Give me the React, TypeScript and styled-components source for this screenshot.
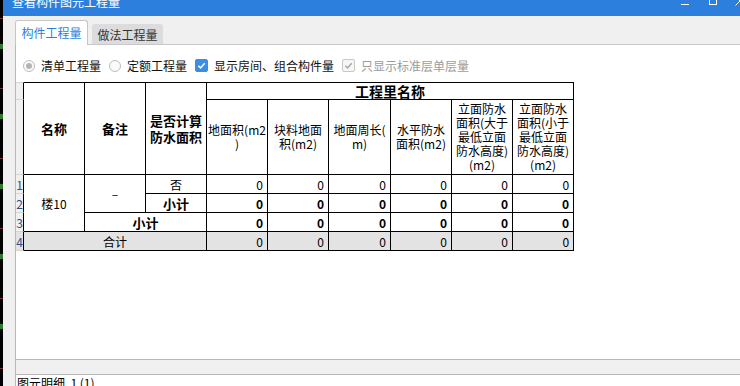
import styled, { createGlobalStyle } from "styled-components";

const GlobalStyle = createGlobalStyle`
  * { box-sizing: border-box; }
  body {
    margin: 0;
    background: #000;
    font-family: "Noto Sans CJK SC", "Liberation Sans", sans-serif;
    font-size: 12px;
    color: #000;
  }
`;

const Screen = styled.div`
  display: flex;
  width: 740px;
  height: 386px;
  overflow: hidden;
`;

// a sliver of the app behind the dialog
const Backdrop = styled.div`
  width: 3px;
  flex-shrink: 0;
  background: repeating-linear-gradient(
    180deg,
    #000 0 18px,
    #7a3030 18px 19px,
    #000 19px 44px,
    #2f7a2f 44px 49px,
    #000 49px 70px
  );
`;

const Window = styled.div`
  flex: 1;
  display: flex;
  flex-direction: column;
  background: #f0f0f0;
  min-width: 0;
`;

const TitleBar = styled.div`
  height: 16px;
  flex-shrink: 0;
  display: flex;
  align-items: flex-start;
  padding-left: 9px;
  background: #2d7fdd;
  overflow: hidden;
`;

const TitleText = styled.span`
  color: #fff;
  font-size: 12px;
  line-height: 12px;
  margin-top: -4px;
`;

const Controls = styled.div`
  margin-left: auto;
  margin-right: -5px;
  display: flex;
  align-items: flex-start;
  gap: 20px;
`;

const MinBtn = styled.div`
  width: 8px;
  height: 1px;
  margin-top: 4px;
  background: #fff;
`;

const MaxBtn = styled.div`
  width: 8px;
  height: 8px;
  margin-top: -3px;
  border: 1px solid #fff;
`;

const CloseBtn = styled.svg`
  width: 10px;
  height: 10px;
  margin-top: -4px;
  margin-left: -2px;
`;

const Body = styled.div`
  flex: 1;
  display: flex;
  flex-direction: column;
  padding: 4px 0 0 12px;
  min-height: 0;
`;

const Tabs = styled.div`
  display: flex;
  align-items: flex-end;
  gap: 4px;
  position: relative;
  z-index: 1;
`;

const Tab = styled.div<{ $active?: boolean }>`
  height: ${(p) => (p.$active ? 25 : 20)}px;
  width: ${(p) => (p.$active ? 73 : 71)}px;
  margin-bottom: ${(p) => (p.$active ? -1 : 0)}px;
  display: flex;
  align-items: center;
  justify-content: center;
  padding-bottom: ${(p) => (p.$active ? 1 : 0)}px;
  border-radius: 3px 3px 0 0;
  border: ${(p) => (p.$active ? "1px solid #c6c6c6" : "none")};
  border-bottom: none;
  background: ${(p) => (p.$active ? "#fff" : "#dcdcdc")};
  color: ${(p) => (p.$active ? "#2d7fdd" : "#333")};
  font-size: 12px;
`;

const Panel = styled.div`
  flex: 1;
  display: flex;
  flex-direction: column;
  background: #fff;
  border-top: 1px solid #c8c8c8;
  border-left: 1px solid #b8b8b8;
  min-height: 0;
`;

const Options = styled.div`
  height: 18px;
  margin: 12px 0 8px;
  padding-left: 7px;
  display: flex;
  align-items: center;
  gap: 8px;
`;

const Option = styled.label<{ $disabled?: boolean }>`
  display: flex;
  align-items: center;
  gap: 6px;
  color: ${(p) => (p.$disabled ? "#9c9c9c" : "#111")};
  white-space: nowrap;
`;

const Radio = styled.span<{ $checked?: boolean }>`
  width: 12px;
  height: 12px;
  border-radius: 50%;
  border: 1px solid #bdbdbd;
  background: #fafafa;
  display: flex;
  align-items: center;
  justify-content: center;
  &::after {
    content: "";
    width: 6px;
    height: 6px;
    border-radius: 50%;
    background: ${(p) => (p.$checked ? "#b4b4b4" : "transparent")};
  }
`;

const Check = styled.span<{ $disabled?: boolean }>`
  width: 13px;
  height: 13px;
  border-radius: 2px;
  border: 1px solid ${(p) => (p.$disabled ? "#c8c8c8" : "#3a8ee6")};
  background: ${(p) => (p.$disabled ? "#f6f6f6" : "#3a8ee6")};
  display: flex;
  align-items: center;
  justify-content: center;
  svg {
    width: 9px;
    height: 9px;
  }
`;

const GridArea = styled.div`
  height: 277px;
  flex-shrink: 0;
  background: #fff;
`;

const Table = styled.table`
  border-collapse: separate;
  border-spacing: 0;
  table-layout: fixed;
  width: 558px;
  font-size: 12px;
`;

const Row = styled.tr<{ $h: number }>`
  height: ${(p) => p.$h}px;
`;

const Gutter = styled.td<{ $top?: boolean; $shade?: boolean }>`
  padding: 0;
  border-right: 1px solid #000;
  border-bottom: 1px solid #d4d4d4;
  border-top: ${(p) => (p.$top ? "1px solid #d4d4d4" : "none")};
  background: ${(p) => (p.$shade ? "#e3e3e3" : "#f0f0f0")};
  color: #2f4f88;
  text-align: center;
  line-height: 13px;
  overflow: hidden;
`;

const Cell = styled.td<{
  $align?: "left" | "center" | "right";
  $bold?: boolean;
  $shade?: boolean;
  $top?: boolean;
  $size?: number;
  $lh?: number;
}>`
  padding: 0 ${(p) => (p.$align === "right" ? 4 : 1)}px 0 1px;
  border-right: 1px solid #000;
  border-bottom: 1px solid #000;
  border-top: ${(p) => (p.$top ? "1px solid #000" : "none")};
  background: ${(p) => (p.$shade ? "#e3e3e3" : "#fff")};
  text-align: ${(p) => p.$align ?? "center"};
  font-weight: ${(p) => (p.$bold ? 700 : 400)};
  font-size: ${(p) => p.$size ?? 12}px;
  line-height: ${(p) => p.$lh ?? 13}px;
  white-space: nowrap;
  vertical-align: middle;
  overflow: hidden;
`;

const Splitter = styled.div`
  height: 16px;
  flex-shrink: 0;
  background: #f0f0f0;
  border-top: 1px solid #b8b8b8;
  border-bottom: 1px solid #b8b8b8;
`;

const Status = styled.div`
  padding: 1px 0 0 1px;
  line-height: 14px;
  white-space: pre;
`;

const widths = [8, 61, 61, 61, 61, 61, 62, 61, 61, 61];

const qtyHeads = [
  ["地面积(m2", ")"],
  ["块料地面", "积(m2)"],
  ["地面周长(", "m)"],
  ["水平防水", "面积(m2)"],
  ["立面防水", "面积(大于", "最低立面", "防水高度)", "(m2)"],
  ["立面防水", "面积(小于", "最低立面", "防水高度)", "(m2)"],
];

const zeros = [0, 0, 0, 0, 0, 0];

function Lines({ lines }: { lines: string[] }) {
  return (
    <>
      {lines.map((l, i) => (
        <div key={i}>{l}</div>
      ))}
    </>
  );
}

function Values({ bold, shade }: { bold?: boolean; shade?: boolean }) {
  return (
    <>
      {zeros.map((v, i) => (
        <Cell key={i} $align="right" $bold={bold} $shade={shade}>
          {v}
        </Cell>
      ))}
    </>
  );
}

const Tick = ({ color }: { color: string }) => (
  <svg viewBox="0 0 10 10">
    <path d="M1.5 5.2 L4 7.6 L8.6 2.4" fill="none" stroke={color} strokeWidth={1.6} />
  </svg>
);

export default function App() {
  return (
    <Screen>
      <GlobalStyle />
      <Backdrop />
      <Window>
        <TitleBar>
          <TitleText>查看构件图元工程量</TitleText>
          <Controls>
            <MinBtn />
            <MaxBtn />
            <CloseBtn viewBox="0 0 10 10">
              <path d="M0.5 0.5 L9.5 9.5 M9.5 0.5 L0.5 9.5" stroke="#fff" strokeWidth={1} />
            </CloseBtn>
          </Controls>
        </TitleBar>
        <Body>
          <Tabs>
            <Tab $active>构件工程量</Tab>
            <Tab>做法工程量</Tab>
          </Tabs>
          <Panel>
            <Options>
              <Option>
                <Radio $checked />
                清单工程量
              </Option>
              <Option>
                <Radio />
                定额工程量
              </Option>
              <Option>
                <Check>
                  <Tick color="#fff" />
                </Check>
                显示房间、组合构件量
              </Option>
              <Option $disabled>
                <Check $disabled>
                  <Tick color="#a8a8a8" />
                </Check>
                只显示标准层单层量
              </Option>
            </Options>
            <GridArea>
              <Table>
                <colgroup>
                  {widths.map((w, i) => (
                    <col key={i} style={{ width: w }} />
                  ))}
                </colgroup>
                <tbody>
                  <Row $h={18}>
                    <Gutter $top />
                    <Cell rowSpan={2} $top $bold $size={13}>名称</Cell>
                    <Cell rowSpan={2} $top $bold $size={13}>备注</Cell>
                    <Cell rowSpan={2} $top $bold $size={13} $lh={16}>
                      <Lines lines={["是否计算", "防水面积"]} />
                    </Cell>
                    <Cell colSpan={6} $top $bold $size={14}>工程里名称</Cell>
                  </Row>
                  <Row $h={75}>
                    <Gutter />
                    {qtyHeads.map((h, i) => (
                      <Cell key={i} $lh={14}>
                        <Lines lines={h} />
                      </Cell>
                    ))}
                  </Row>
                  <Row $h={19}>
                    <Gutter>1</Gutter>
                    <Cell rowSpan={3}>楼10</Cell>
                    <Cell rowSpan={2}>–</Cell>
                    <Cell>否</Cell>
                    <Values />
                  </Row>
                  <Row $h={19}>
                    <Gutter>2</Gutter>
                    <Cell $bold $size={13}>小计</Cell>
                    <Values bold />
                  </Row>
                  <Row $h={19}>
                    <Gutter>3</Gutter>
                    <Cell colSpan={2} $bold $size={13}>小计</Cell>
                    <Values bold />
                  </Row>
                  <Row $h={19}>
                    <Gutter $shade>4</Gutter>
                    <Cell colSpan={3} $shade>合计</Cell>
                    <Values shade />
                  </Row>
                </tbody>
              </Table>
            </GridArea>
            <Splitter />
            <Status>图元明细  1 (1)</Status>
          </Panel>
        </Body>
      </Window>
    </Screen>
  );
}
